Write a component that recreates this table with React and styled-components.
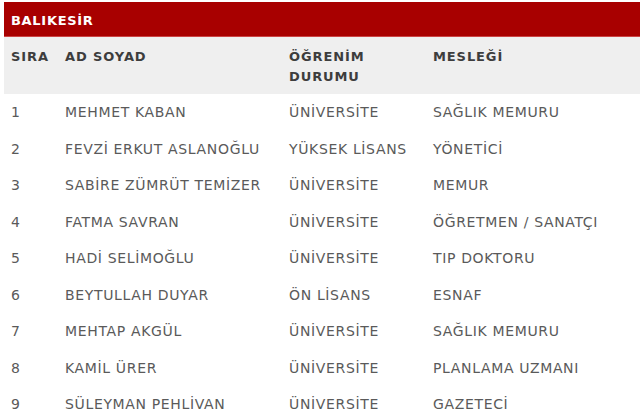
import React from "react";
import styled, { createGlobalStyle } from "styled-components";

const Global = createGlobalStyle`
  html, body { margin: 0; padding: 0; background: #fff; }
  body { font-family: "DejaVu Sans", "Noto Sans", sans-serif; }
`;

const Wrap = styled.div`
  padding: 2px 0 0 4px;
`;

const Title = styled.div`
  background: #a80000;
  color: #fff;
  font-weight: bold;
  font-size: 13px;
  letter-spacing: 0.7px;
  height: 35px;
  line-height: 37px;
  padding-left: 7px;
  border-bottom: 1px solid #c44;
  box-sizing: border-box;
`;

const Grid = styled.div`
  display: grid;
  grid-template-columns: 54px 224px 144px 1fr;
`;

const HeadCell = styled.div`
  background: #efefef;
  color: #3d3d3d;
  font-weight: bold;
  font-size: 13px;
  letter-spacing: 0.9px;
  line-height: 20px;
  padding: 10px 7px 7px 7px;
  height: 57px;
  box-sizing: border-box;
`;

const Cell = styled.div`
  color: #5a5a5a;
  font-size: 14px;
  letter-spacing: 0.65px;
  height: 36.5px;
  line-height: 37px;
  padding-left: 7px;
  white-space: nowrap;
`;

const rows = [
  ["1", "MEHMET KABAN", "ÜNİVERSİTE", "SAĞLIK MEMURU"],
  ["2", "FEVZİ ERKUT ASLANOĞLU", "YÜKSEK LİSANS", "YÖNETİCİ"],
  ["3", "SABİRE ZÜMRÜT TEMİZER", "ÜNİVERSİTE", "MEMUR"],
  ["4", "FATMA SAVRAN", "ÜNİVERSİTE", "ÖĞRETMEN / SANATÇI"],
  ["5", "HADİ SELİMOĞLU", "ÜNİVERSİTE", "TIP DOKTORU"],
  ["6", "BEYTULLAH DUYAR", "ÖN LİSANS", "ESNAF"],
  ["7", "MEHTAP AKGÜL", "ÜNİVERSİTE", "SAĞLIK MEMURU"],
  ["8", "KAMİL ÜRER", "ÜNİVERSİTE", "PLANLAMA UZMANI"],
  ["9", "SÜLEYMAN PEHLİVAN", "ÜNİVERSİTE", "GAZETECİ"],
];

export default function App() {
  return (
    <Wrap>
      <Global />
      <Title>BALIKESİR</Title>
      <Grid>
        <HeadCell>SIRA</HeadCell>
        <HeadCell>AD SOYAD</HeadCell>
        <HeadCell>ÖĞRENİM DURUMU</HeadCell>
        <HeadCell>MESLEĞİ</HeadCell>
        {rows.map((r) =>
          r.map((c, i) => <Cell key={r[0] + "-" + i}>{c}</Cell>)
        )}
      </Grid>
    </Wrap>
  );
}
